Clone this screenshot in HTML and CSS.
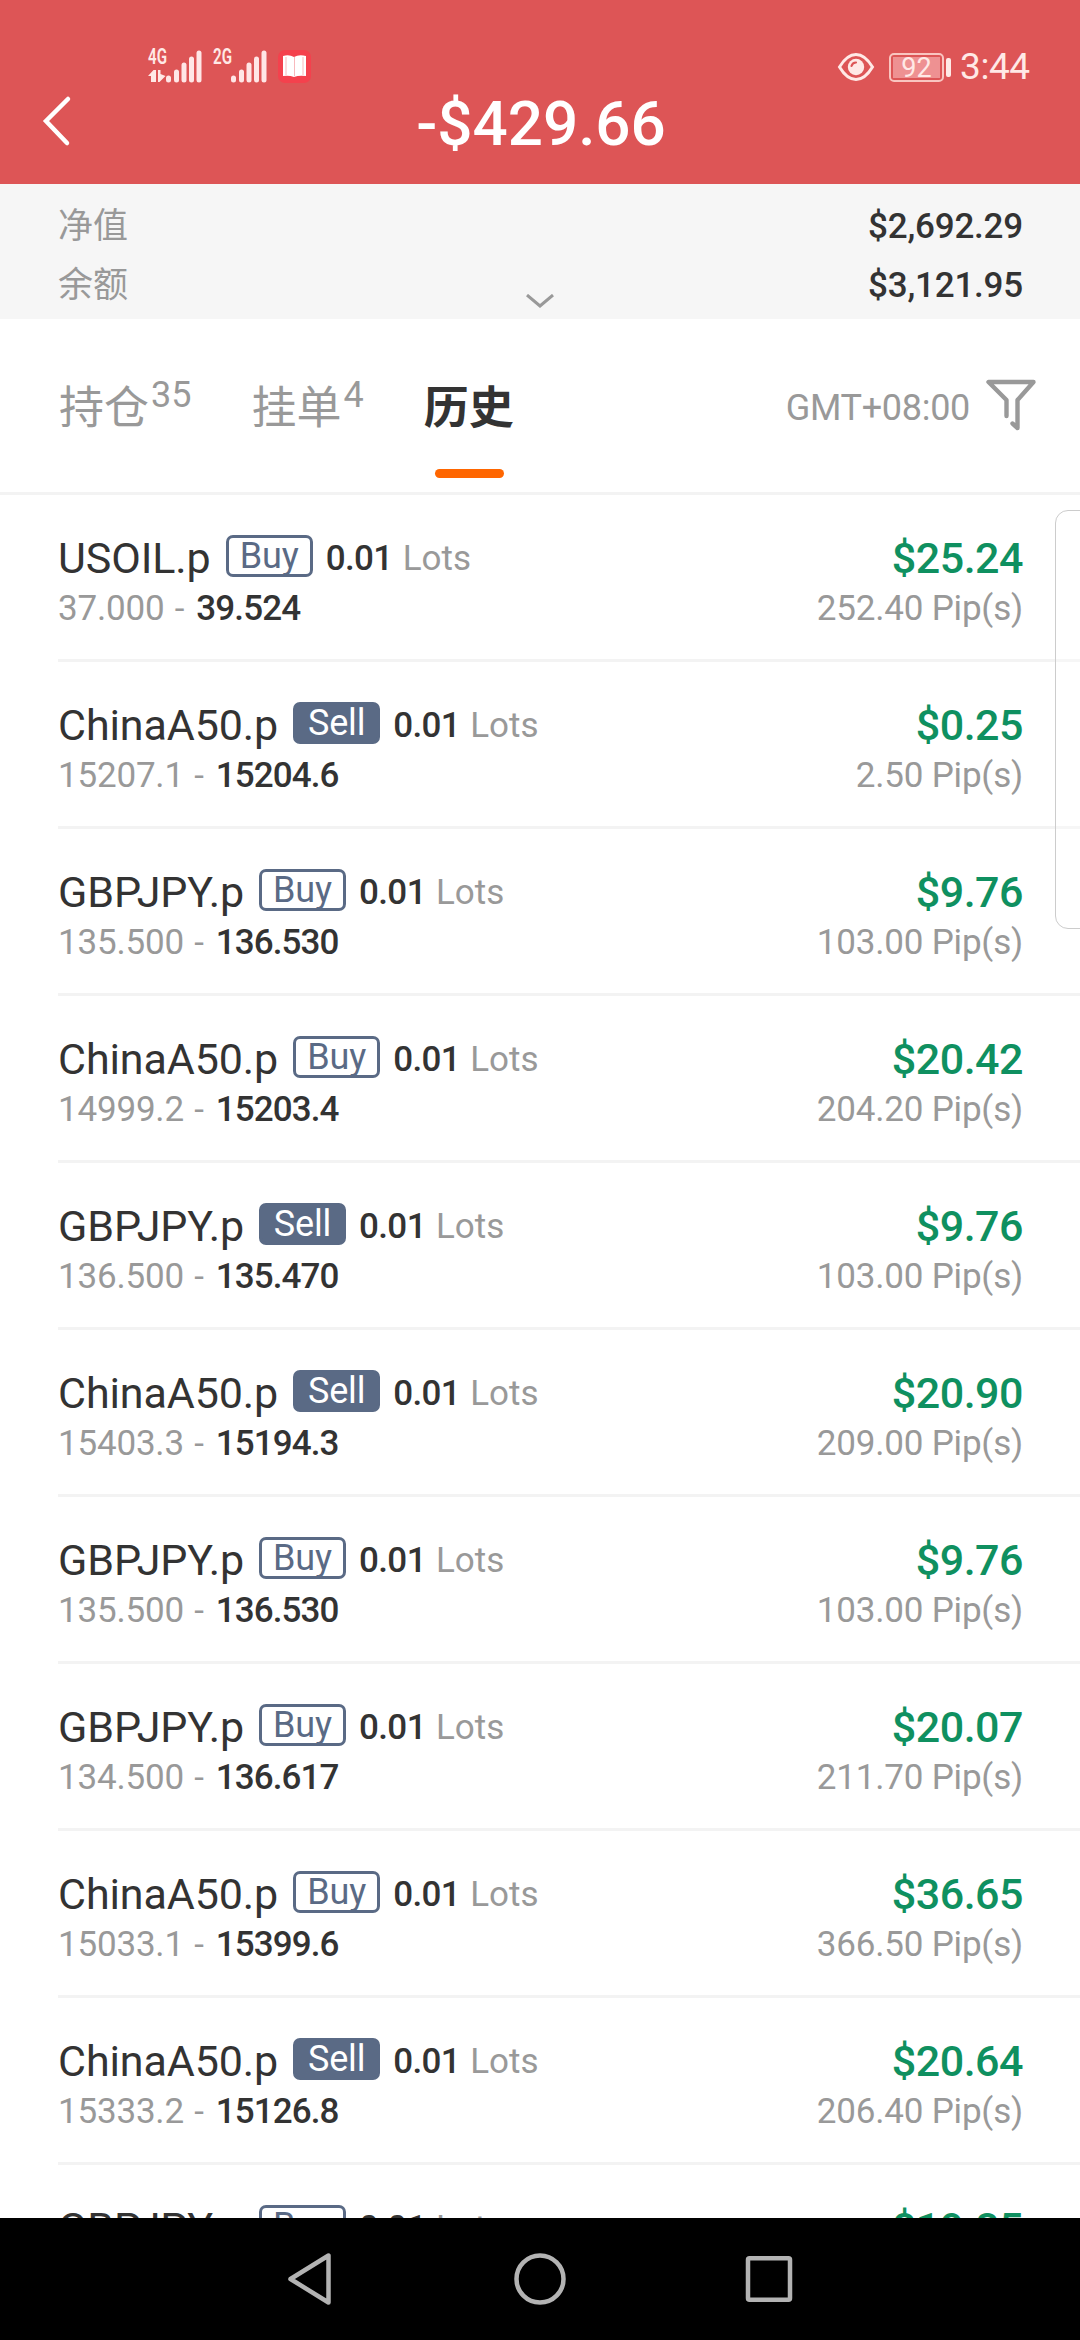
FILE: index.html
```html
<!DOCTYPE html>
<html lang="zh-CN">
<head>
<meta charset="utf-8">
<title>历史</title>
<link rel="stylesheet" href="styles.css">
</head>
<body>
<div class="screen">
  <header class="header">
    <div class="status">
      <svg class="signals" width="170" height="40" viewBox="0 0 170 40">
        <text class="net" x="0" y="18" textLength="19" lengthAdjust="spacingAndGlyphs">4G</text>
        <path class="ink" d="M0 30L5.500 24V36H3V30ZM5.500 24H8V36H5.500ZM10 24H12.500V28L17.500 30L11.500 36H10Z"/>
        <g class="bars">
          <path d="M20.500 36V38"/><path d="M28.500 30V38"/><path d="M36 23V38"/><path d="M43.500 17V38"/><path d="M51 11V38"/>
        </g>
        <text class="net" x="65" y="18" textLength="19" lengthAdjust="spacingAndGlyphs">2G</text>
        <g class="bars" transform="translate(65 0)">
          <path d="M20.500 36V38"/><path d="M28.500 30V38"/><path d="M36 23V38"/><path d="M43.500 17V38"/><path d="M51 11V38"/>
        </g>
        <rect x="130" y="4" width="33" height="33" rx="7" fill="#f4414d"/>
        <path fill="#fff" d="M135 10q6-2 11 1q5-3 12-1v20q-7-1-12 1q-5-2-11-1z"/>
        <path stroke="#f8b9bd" stroke-width="1" d="M146.500 11V30M138 11V29M155 11V29"/>
      </svg>
      <div class="status-right">
        <svg width="38" height="30" viewBox="0 0 38 30">
          <path d="M2.500 15Q10 2.500 19 2.500T35.500 15Q28 27.500 19 27.500T2.500 15Z" fill="none" stroke="#ffe9e6" stroke-width="3"/>
          <circle cx="19" cy="15" r="8.200" fill="#ffe9e6"/>
          <path d="M14.500 14Q15.500 10.500 19 10.500" fill="none" stroke="#dd5556" stroke-width="2.200" stroke-linecap="round"/>
        </svg>
        <div class="battery"><span class="level">92</span></div>
        <span class="clock">3:44</span>
      </div>
    </div>
    <div class="titlebar">
      <svg class="back" width="32" height="52" viewBox="0 0 32 52"><path d="M27 4L5 26L26 48" fill="none" stroke="#fff" stroke-width="4.500" stroke-linecap="round"/></svg>
      <h1 class="total">-$429.66</h1>
    </div>
  </header>

  <section class="summary">
    <div class="sum-row"><span class="sum-label">净值</span><span class="sum-value">$2,692.29</span></div>
    <div class="sum-row"><span class="sum-label">余额</span><span class="sum-value">$3,121.95</span></div>
    <svg class="expand" width="30" height="14" viewBox="0 0 30 14"><path d="M2 1L15 12L28 1" fill="none" stroke="#999" stroke-width="3"/></svg>
  </section>

  <nav class="tabs">
    <div class="tab"><span>持仓</span><span class="count">35</span></div>
    <div class="tab"><span>挂单</span><span class="count">4</span></div>
    <div class="tab active"><span>历史</span></div>
    <span class="zone">GMT+08:00</span>
    <svg class="filter" width="52" height="54" viewBox="0 0 52 54"><path d="M21.500 38V22L3.500 4H48.500L32.500 22V50L27.500 45.500" fill="none" stroke="#999" stroke-width="4.400" stroke-linecap="round" stroke-linejoin="round"/></svg>
  </nav>

  <main class="list">
    <article class="row"><div class="line"><span class="name">USOIL.p</span><span class="side buy">Buy</span><span class="lots">0.01</span><span class="unit">Lots</span><span class="profit">$25.24</span></div><div class="line prices"><span class="open">37.000 -</span><span class="close">39.524</span><span class="pips">252.40 Pip(s)</span></div></article>
    <article class="row"><div class="line"><span class="name">ChinaA50.p</span><span class="side sell">Sell</span><span class="lots">0.01</span><span class="unit">Lots</span><span class="profit">$0.25</span></div><div class="line prices"><span class="open">15207.1 -</span><span class="close">15204.6</span><span class="pips">2.50 Pip(s)</span></div></article>
    <article class="row"><div class="line"><span class="name">GBPJPY.p</span><span class="side buy">Buy</span><span class="lots">0.01</span><span class="unit">Lots</span><span class="profit">$9.76</span></div><div class="line prices"><span class="open">135.500 -</span><span class="close">136.530</span><span class="pips">103.00 Pip(s)</span></div></article>
    <article class="row"><div class="line"><span class="name">ChinaA50.p</span><span class="side buy">Buy</span><span class="lots">0.01</span><span class="unit">Lots</span><span class="profit">$20.42</span></div><div class="line prices"><span class="open">14999.2 -</span><span class="close">15203.4</span><span class="pips">204.20 Pip(s)</span></div></article>
    <article class="row"><div class="line"><span class="name">GBPJPY.p</span><span class="side sell">Sell</span><span class="lots">0.01</span><span class="unit">Lots</span><span class="profit">$9.76</span></div><div class="line prices"><span class="open">136.500 -</span><span class="close">135.470</span><span class="pips">103.00 Pip(s)</span></div></article>
    <article class="row"><div class="line"><span class="name">ChinaA50.p</span><span class="side sell">Sell</span><span class="lots">0.01</span><span class="unit">Lots</span><span class="profit">$20.90</span></div><div class="line prices"><span class="open">15403.3 -</span><span class="close">15194.3</span><span class="pips">209.00 Pip(s)</span></div></article>
    <article class="row"><div class="line"><span class="name">GBPJPY.p</span><span class="side buy">Buy</span><span class="lots">0.01</span><span class="unit">Lots</span><span class="profit">$9.76</span></div><div class="line prices"><span class="open">135.500 -</span><span class="close">136.530</span><span class="pips">103.00 Pip(s)</span></div></article>
    <article class="row"><div class="line"><span class="name">GBPJPY.p</span><span class="side buy">Buy</span><span class="lots">0.01</span><span class="unit">Lots</span><span class="profit">$20.07</span></div><div class="line prices"><span class="open">134.500 -</span><span class="close">136.617</span><span class="pips">211.70 Pip(s)</span></div></article>
    <article class="row"><div class="line"><span class="name">ChinaA50.p</span><span class="side buy">Buy</span><span class="lots">0.01</span><span class="unit">Lots</span><span class="profit">$36.65</span></div><div class="line prices"><span class="open">15033.1 -</span><span class="close">15399.6</span><span class="pips">366.50 Pip(s)</span></div></article>
    <article class="row"><div class="line"><span class="name">ChinaA50.p</span><span class="side sell">Sell</span><span class="lots">0.01</span><span class="unit">Lots</span><span class="profit">$20.64</span></div><div class="line prices"><span class="open">15333.2 -</span><span class="close">15126.8</span><span class="pips">206.40 Pip(s)</span></div></article>
    <article class="row"><div class="line"><span class="name">GBPJPY.p</span><span class="side buy">Buy</span><span class="lots">0.01</span><span class="unit">Lots</span><span class="profit">$19.85</span></div></article>
    <div class="drawer"></div>
  </main>

  <footer class="navbar">
    <svg width="52" height="56" viewBox="0 0 52 56"><path d="M5.500 28L43.500 4.500V51.500Z"/></svg>
    <svg width="56" height="56" viewBox="0 0 56 56"><circle cx="28" cy="28" r="23.500"/></svg>
    <svg width="52" height="56" viewBox="0 0 52 56"><rect x="5" y="7.300" width="42" height="41.500" rx="1.500"/></svg>
  </footer>
</div>
</body>
</html>
```

FILE: styles.css
```css
* { box-sizing: border-box; }
body { margin: 0; background: #fff; font-family: Roboto, "Noto Sans CJK SC", sans-serif; color: #333; }
.screen { width: 1080px; height: 2340px; display: flex; flex-direction: column; overflow: hidden; }
.screen > * { flex: none; }

.header { height: 184px; background: #dd5556; display: flex; flex-direction: column; padding-top: 46px; }
.status { height: 40px; display: flex; justify-content: space-between; padding: 0 49px 0 148px; }
.net { font: 600 21.5px Roboto, sans-serif; fill: #ffe9e6; }
.ink { fill: #ffe9e6; }
.bars { fill: none; stroke: #ffe6e6; stroke-width: 5px; }
.bars path { stroke-linecap: round; transform: translateY(-4px); }
.signals { overflow: visible; }
.status-right { display: flex; align-items: center; height: 42px; color: #ffe9e6; }
.battery { width: 55px; height: 29px; margin-left: 14px; border: 2px solid #f9c5c0; border-radius: 5px; padding: 2px; position: relative; }
.battery::after { content: ""; position: absolute; right: -9px; top: 3px; width: 5px; height: 19px; border-radius: 2px; background: #ffe9e6; }
.level { display: block; height: 21px; background: #ee9192; font-size: 27px; line-height: 22px; text-align: center; }
.clock { margin-left: 16px; font-size: 37px; line-height: 44px; width: 71px; white-space: nowrap; letter-spacing: -.4px; }
.titlebar { height: 98px; display: flex; align-items: flex-start; padding-left: 41px; }
.back { margin-top: 9px; }
.total { margin: 0 71px 0 0; flex: 1; text-align: center; font-size: 62px; line-height: 75px; font-weight: 500; color: #fff; }

.summary { height: 135px; background: #f6f6f6; padding: 13px 57px 0 58px; position: relative; }
.sum-row { display: flex; justify-content: space-between; height: 59px; line-height: 60px; }
.sum-label { font-size: 35px; color: #999; }
.sum-value { font-size: 35px; font-weight: 500; letter-spacing: -.2px; }
.expand { position: absolute; left: 525px; top: 110px; }

.tabs { height: 176px; border-bottom: 3px solid #f3f3f3; display: flex; align-items: flex-start; padding: 0 43px 0 59px; color: #999; }
.tab { position: relative; display: flex; height: 173px; font-size: 45px; line-height: 179px; margin-right: 60px; }
.count { font-size: 36px; line-height: 152px; margin-left: 2px; }
.active { color: #333; font-weight: 700; }
.active::after { content: ""; position: absolute; left: 11px; bottom: 14px; width: 69px; height: 9px; border-radius: 5px; background: #ff6600; }
.zone { margin-left: auto; font-size: 36px; line-height: 178px; letter-spacing: -.3px; }
.filter { margin: 59px 0 0 15px; }

.list { height: 1723px; position: relative; overflow: hidden; }
.row { height: 167px; margin-left: 58px; padding: 37px 57px 0 0; border-bottom: 3px solid #f3f3f3; }
.line { display: flex; align-items: flex-start; height: 50px; line-height: 52px; white-space: nowrap; }
.name { font-size: 43px; letter-spacing: -.1px; }
.side { width: 87px; height: 42px; margin: 3px 0 0 15px; border: 3px solid #5a6a85; border-radius: 7px; text-align: center; font-size: 36px; line-height: 36px; color: #5a6a85; letter-spacing: -.2px; }
.sell { background: #5a6a85; color: #fff; }
.lots { margin-left: 13px; font-size: 35px; line-height: 54px; font-weight: 500; letter-spacing: -.6px; }
.unit { margin-left: 10px; font-size: 35px; line-height: 54px; font-weight: 450; color: #999; }
.profit { margin-left: auto; font-size: 43px; font-weight: 500; color: #0f9060; letter-spacing: -.5px; }
.prices { font-size: 35px; height: 52px; line-height: 53px; }
.open { color: #999; font-weight: 450; letter-spacing: -.2px; word-spacing: 2px; }
.close { font-weight: 500; margin-left: 12px; letter-spacing: -.9px; }
.pips { margin-left: auto; color: #999; font-weight: 450; letter-spacing: -.2px; }
.drawer { position: absolute; left: 1055px; top: 15px; width: 40px; height: 419px; border: 1px solid #ccc; border-radius: 13px; background: rgba(255, 255, 255, .3); }

.navbar { height: 122px; background: #000; display: flex; justify-content: center; align-items: center; gap: 175px; }
.navbar svg { fill: none; stroke: #b3b3b3; stroke-width: 4.5px; stroke-linejoin: round; }
```
